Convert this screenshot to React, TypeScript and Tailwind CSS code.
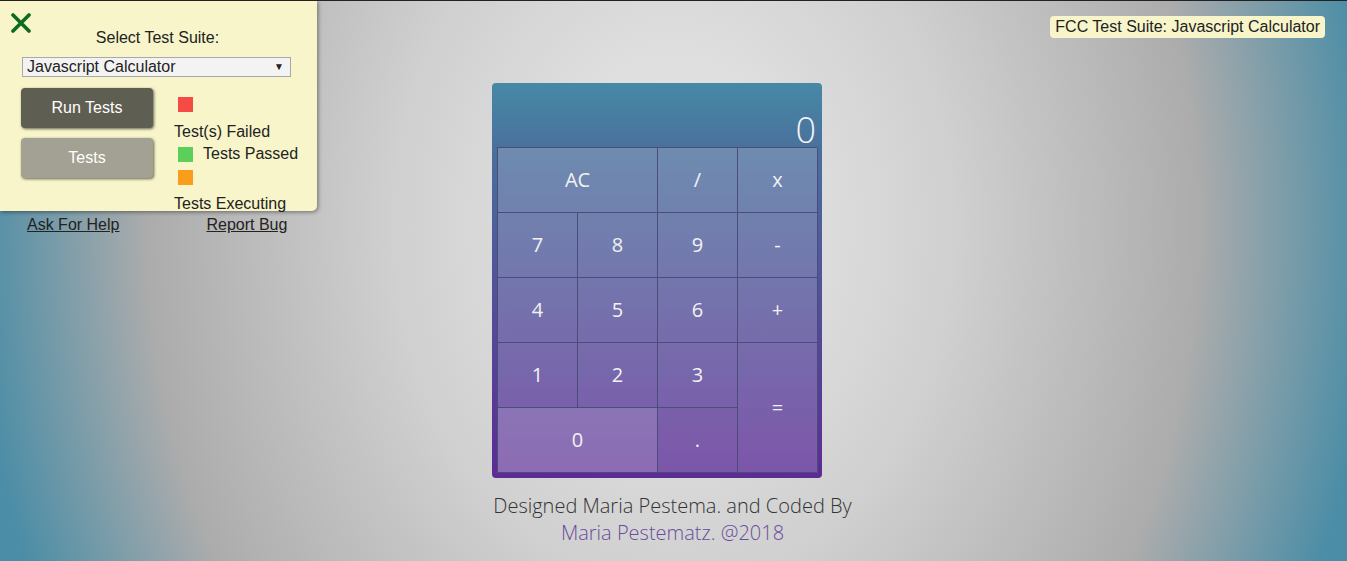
import React from 'react';

const keys: { label: string; cls: string }[] = [
  { label: 'AC', cls: 'col-span-2 bg-white/20' },
  { label: '/', cls: 'bg-white/20' },
  { label: 'x', cls: 'bg-white/20' },
  { label: '7', cls: 'bg-white/20' },
  { label: '8', cls: 'bg-white/20' },
  { label: '9', cls: 'bg-white/20' },
  { label: '-', cls: 'bg-white/20' },
  { label: '4', cls: 'bg-white/20' },
  { label: '5', cls: 'bg-white/20' },
  { label: '6', cls: 'bg-white/20' },
  { label: '+', cls: 'bg-white/20' },
  { label: '1', cls: 'bg-white/20' },
  { label: '2', cls: 'bg-white/20' },
  { label: '3', cls: 'bg-white/20' },
  { label: '=', cls: 'row-span-2 bg-white/20' },
  { label: '0', cls: 'col-span-2 bg-white/30' },
  { label: '.', cls: 'bg-white/20' },
];

function TestPanel() {
  return (
    <div className="absolute top-0 left-0 w-[317px] font-['Liberation_Sans',Arial,sans-serif] text-[16px] text-[#222]">
      <div className="relative h-[210px] w-[317px] rounded-br-[5px] bg-[#f7f5c9] shadow-[1px_1px_4px_rgba(0,0,0,0.45)]">
        <button className="absolute top-[12px] left-[10px]" aria-label="close">
          <svg width="22" height="20" viewBox="0 0 22 20">
            <path d="M3 2 L19 18 M19 2 L3 18" stroke="#0b6b1e" strokeWidth="3.6" strokeLinecap="round" />
          </svg>
        </button>
        <div className="pr-[2px] pt-[28px] text-center leading-[18px]">Select Test Suite:</div>
        <div className="ml-[22px] mt-[10px] flex h-[20px] w-[269px] items-center justify-between border border-[#a9a9a9] bg-[#f3f3f3] pl-[4px] pr-[6px] leading-[18px]">
          <span>Javascript Calculator</span>
          <span className="text-[10px]">▼</span>
        </div>
        <div className="mt-[11px] flex">
          <div className="ml-[21px] w-[132px]">
            <div className="flex h-[40px] items-center justify-center rounded-[4px] bg-[#5f5e53] text-white shadow-[1px_1px_3px_rgba(0,0,0,0.6)]">
              Run Tests
            </div>
            <div className="mt-[10px] flex h-[40px] items-center justify-center rounded-[4px] bg-[#a2a194] text-white shadow-[1px_1px_3px_rgba(0,0,0,0.6)]">
              Tests
            </div>
          </div>
          <div className="ml-[21px] pt-[9px] leading-[18px]">
            <div className="ml-[4px] h-[15px] w-[15px] bg-[#f44c44]" />
            <div className="mt-[11px]">Test(s) Failed</div>
            <div className="mt-[4px] flex items-center">
              <span className="ml-[4px] mr-[10px] h-[15px] w-[15px] bg-[#5ccf5a]" />
              <span>Tests Passed</span>
            </div>
            <div className="ml-[4px] mt-[7px] h-[15px] w-[15px] bg-[#fa9d1c]" />
            <div className="mt-[10px]">Tests Executing</div>
          </div>
        </div>
      </div>
      <div className="mt-[5px] flex leading-[18px]">
        <span className="ml-[27px] underline">Ask For Help</span>
        <span className="ml-[87px] underline">Report Bug</span>
      </div>
    </div>
  );
}

export default function App() {
  return (
    <div className="relative min-h-[561px] w-full overflow-hidden border-t border-[#222] bg-[radial-gradient(ellipse_700px_900px_at_50%_40%,#ebebeb_0%,#d0d0d0_40%,#acacac_75%,#4b8da6_100%)]">
      <TestPanel />
      <div className="absolute top-[15px] right-[22px] rounded-[4px] bg-[#f7f5c9] px-[5px] font-['Liberation_Sans',Arial,sans-serif] text-[16px] leading-[22px] text-[#222]">
        FCC Test Suite: Javascript Calculator
      </div>

      <div className="flex flex-col items-center font-['Open_Sans',sans-serif]">
        <div className="mr-[33px] mt-[82px] w-[330px] rounded-[4px] bg-[linear-gradient(to_bottom,#4689a5_0%,#4a6e9c_18%,#5c2b94_100%)] px-[5px] pb-[5px]">
          <div className="flex h-[64px] items-end justify-end pr-[1px] text-[36px] font-light leading-[34px] text-[#f4f4f4]">
            0
          </div>
          <div className="grid grid-cols-[repeat(4,80px)] grid-rows-[repeat(5,65px)] border-t border-l border-[#4a4d7a]">
            {keys.map((k) => (
              <div
                key={k.label}
                className={`flex items-center justify-center border-r border-b border-[#4a4d7a] text-[20px] text-[#f2f2f2] ${k.cls}`}
              >
                {k.label}
              </div>
            ))}
          </div>
        </div>
        <div className="mr-[2px] mt-[14px] text-center text-[20px] font-light leading-[27px]">
          <div className="text-[#333]">Designed Maria Pestema. and Coded By</div>
          <div className="text-[#6a4c9c]">Maria Pestematz. @2018</div>
        </div>
      </div>
    </div>
  );
}
